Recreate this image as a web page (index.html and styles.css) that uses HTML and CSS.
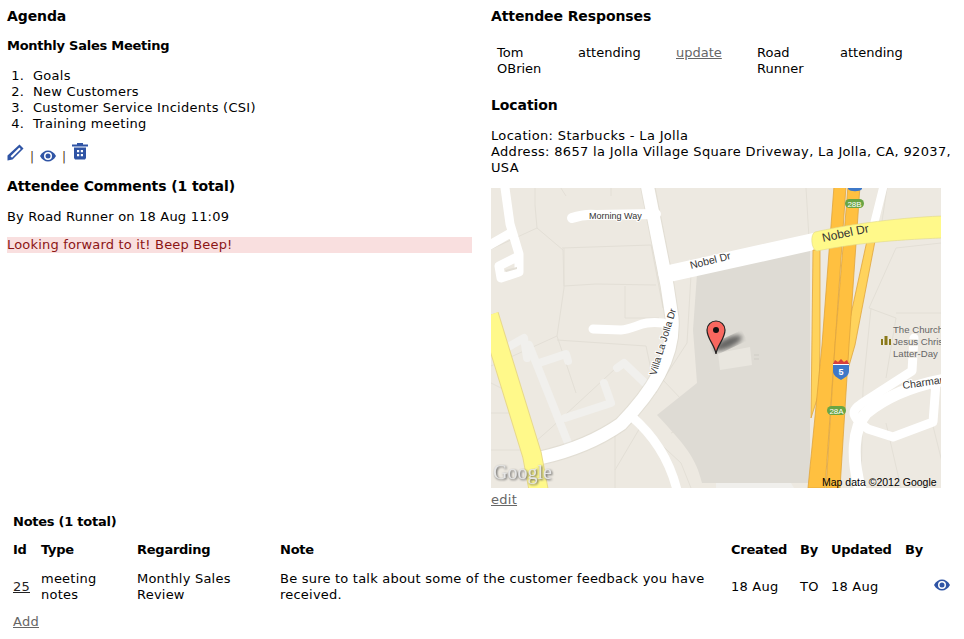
FILE: index.html
```html
<!DOCTYPE html>
<html lang="en">
<head>
    <meta charset="UTF-8">
    <title>Monthly Sales Meeting</title>
    <link rel="stylesheet" href="styles.css">
</head>
<body>

    <svg class="icon-defs" width="0" height="0">
        <symbol id="icon-eye" viewBox="0 0 16 12">
            <path fill-rule="evenodd" fill="#2f54a5" d="M0 6C2 2.400 4.800 .5 8 .5S14 2.400 16 6C14 9.600 11.200 11.500 8 11.500S2 9.600 0 6ZM8 2A4 4 0 1 0 8 10A4 4 0 1 0 8 2Z"/>
            <circle cx="8" cy="6" r="2.500" fill="#2f54a5"/>
        </symbol>
    </svg>

    <div class="columns">
        <div class="col-left">
            <h3 class="title-first">Agenda</h3>
            <h4 class="meeting-name">Monthly Sales Meeting</h4>
            <ol class="agenda">
                <li>Goals</li>
                <li>New Customers</li>
                <li>Customer Service Incidents (CSI)</li>
                <li>Training meeting</li>
            </ol>
            <div class="actions">
                <svg class="icon-pencil" viewBox="0 0 17 17" width="17" height="17">
                    <path fill-rule="evenodd" fill="#2f54a5" d="M12.500 .5L16.500 4.500L5.500 15.500L.5 16.500V11.500ZM12.300 3.500L3.500 12.200L5 13.700L13.800 5Z"/>
                </svg>
                <span class="sep">|</span>
                <svg class="icon-eye" width="16" height="12"><use href="#icon-eye"/></svg>
                <span class="sep">|</span>
                <svg class="icon-trash" viewBox="0 0 16 17" width="16" height="17">
                    <path fill="#2f54a5" d="M5 0H11V1.500H16V3.500H0V1.500H5Z"/>
                    <path fill-rule="evenodd" fill="#2f54a5" d="M2 4.500H14V15L13 16.500H3L2 15ZM5 7V9.300H7.200V7ZM8.800 7V9.300H11V7ZM5 11V13.300H7.200V11ZM8.800 11V13.300H11V11Z"/>
                </svg>
            </div>
            <h3 class="comments-title">Attendee Comments (1 total)</h3>
            <p class="comment-by">By Road Runner on 18 Aug 11:09</p>
            <p class="comment-body">Looking forward to it! Beep Beep!</p>
        </div>

        <div class="col-right">
            <h3 class="title-first">Attendee Responses</h3>
            <table class="responses">
                <tr>
                    <td class="r-name">Tom<br>OBrien</td>
                    <td class="r-status">attending</td>
                    <td class="r-link"><a href="#" class="link-grey">update</a></td>
                    <td class="r-name2">Road<br>Runner</td>
                    <td>attending</td>
                </tr>
            </table>
            <h3 class="location-title">Location</h3>
            <p class="address">Location: Starbucks - La Jolla<br>Address: 8657 la Jolla Village Square Driveway, La Jolla, CA, 92037, USA</p>
            <svg class="map" viewBox="0 0 450 300" width="450" height="300">
                <defs>
                    <filter id="blur"><feGaussianBlur stdDeviation="2.500"/></filter>
                </defs>
                <rect width="450" height="300" fill="#ede9e1"/>

                <!-- parcels -->
                <g fill="none" stroke="#e3dfd6" stroke-width="1">
                    <path d="M44 0V17L46 40L72 62L73 100L66 148L85 205"/>
                    <path d="M46 40L-2 62M66 148L0 178M66 152L155 158L165 205"/>
                    <path d="M71 60L160 57L172 120M73 60V98L105 96L165 97"/>
                    <path d="M134 98V130H168M75 8L68 -3M120 8V0"/>
                    <path d="M0 195L30 210M0 225H30M0 262H35L60 240L125 180"/>
                    <path d="M124 282L150 238L190 275L200 300M124 240V300"/>
                    <path d="M180 245L210 232L172 192L196 155L200 87"/>
                    <path d="M318 50L315 0M390 40L396 0M405 130L378 120L405 60L450 55"/>
                    <path d="M380 120L372 200L370 300M405 130L395 190M450 125H405"/>
                    <path d="M410 300L395 235M455 290L440 230"/>
                </g>

                <!-- mall block -->
                <path fill="#dedbd4" d="M206 86L319 60V295L211 295C205 270 195 258 166 227L206 195L202 142Z"/>
                <path fill="#e9e6df" d="M227 165L259 159L261 177L229 182Z"/>
                <path fill="none" stroke="#cfccc5" d="M263 167H268M263 171H268"/>
                <path fill="#f0efec" d="M225 300V295H300L303 300Z"/>

                <!-- service roads -->
                <g fill="none" stroke="#f1f0ed" stroke-width="8" stroke-linecap="round" stroke-linejoin="round">
                    <path d="M38 157L79 260M48 175L75 166L77 173M74 230L120 215L113 195"/>
                    <path d="M126 180L133 175L156 197M12 162L33 150L36 170"/>
                </g>

                <!-- white roads -->
                <g fill="none" stroke="#d8d3c8" stroke-width="15" stroke-linecap="round" stroke-linejoin="round" opacity=".5">
                    <path d="M157 0L176 97L181 130C184 170 160 205 130 236C110 250 85 262 49 270"/>
                </g>
                <g fill="none" stroke="#fff" stroke-linecap="round" stroke-linejoin="round">
                    <path stroke-width="13" d="M156 -4L176 97L181 130C184 170 160 205 130 236C110 250 85 262 49 270"/>
                    <path stroke-width="17" d="M176 86L325 53"/>
                    <path stroke-width="10" d="M81 30C90 27 96 26 105 27L165 26"/>
                    <path stroke-width="9" d="M14 0L19 36L28 66V84L10 90L8 78L28 68M18 46L-3 58"/>
                    <path stroke-width="9" d="M102 141L130 142C145 141 150 132 172 135"/>
                    <path stroke-width="9" d="M140 228C160 245 178 270 186 302"/>
                    <path stroke-width="8" d="M392 0L383 36"/>
                    <path stroke-width="9" d="M423 150L421 183L376 212C360 222 357 226 377 241L402 249L442 234L445 195"/>
                    <path stroke-width="12" d="M452 192C420 198 396 208 375 225C362 240 360 270 370 304"/>
                </g>
                <path fill="#e3dfd6" d="M14 82L26 79V81L15 84Z"/>

                <!-- yellow roads -->
                <g fill="none" stroke-linejoin="round">
                    <path stroke="#e8d98a" stroke-width="20" d="M-2 127L41 267L48 304"/>
                    <path stroke="#fff98a" stroke-width="18" d="M-2 127L41 267L48 304"/>
                </g>

                <!-- freeway -->
                <g stroke="#e0a53c" stroke-width=".8">
                    <path fill="#ffd35c" d="M322 62H329V157L328 205L320 230Z"/>
                    <path fill="#ffd35c" d="M377 48L385 48L364 157L353 195H345Z"/>
                    <path fill="#ffc040" d="M343 -2H355L344 157L334 300H317L331 157Z"/>
                    <path fill="#ffc040" d="M357 -2H369L358 157L349 300H335L344 157Z"/>
                </g>

                <!-- Nobel Dr, yellow part -->
                <path fill="#fff98a" stroke="#e0d98a" stroke-width=".6" d="M324 44C350 38 400 30 451 28V50C400 52 360 56 326 63C320 62 319 46 324 44Z"/>

                <!-- shields -->
                <rect x="354" y="11" width="19" height="9" rx="4.500" fill="#69a544"/>
                <text class="shield-text" x="363.500" y="18.500">28B</text>
                <rect x="336" y="218" width="19" height="9" rx="4.500" fill="#69a544"/>
                <text class="shield-text" x="345.500" y="225.500">28A</text>
                <path fill="#3e78c8" d="M357 -2H371V1C369 4 359 4 357 1Z"/>
                <path fill="#3e78c8" d="M342 175H358V183C358 188 353 190 350 192C347 190 342 188 342 183Z"/>
                <path fill="#d8403c" d="M342 176L344 172L347 174L350 171L353 174L356 172L358 176V177H342Z"/>
                <rect x="342" y="176" width="16" height="1" fill="#fff"/>
                <text class="shield-num" x="350" y="187">5</text>

                <!-- street labels -->
                <text class="label label-small" transform="translate(98 31)">Morning Way</text>
                <text class="label label-mid" transform="translate(200 81) rotate(-14)">Nobel Dr</text>
                <text class="label label-big" transform="translate(332 54) rotate(-12)">Nobel Dr</text>
                <text class="label" transform="translate(165 188) rotate(-73)">Villa La Jolla Dr</text>
                <text class="label label-mid" transform="translate(412 201) rotate(-8)">Charman</text>
                <text class="label label-grey" x="402" y="145">The Church</text>
                <text class="label label-grey" x="402" y="157">Jesus Chris</text>
                <text class="label label-grey" x="402" y="169">Latter-Day</text>
                <path fill="#8b7a1a" d="M390 157V151H392V157ZM393.500 157V148H396.500V157ZM398 157V151H400V157Z"/>

                <!-- marker -->
                <ellipse cx="237" cy="155" rx="15" ry="5" fill="#444" opacity=".8" filter="url(#blur)" transform="rotate(-25 237 155)"/>
                <path fill="#f8675f" stroke="#222" stroke-width="1.200" d="M225 166C224 157 216 151 216 142A9 9 0 1 1 234 142C234 151 226 157 225 166Z"/>
                <circle cx="225" cy="142" r="3" fill="#111"/>

                <text class="google" x="2" y="291">Google</text>
                <text class="copyright" x="331" y="298">Map data ©2012 Google</text>
            </svg>
            <a href="#" class="link-grey edit-link">edit</a>
        </div>
    </div>

    <div class="notes">
        <h4 class="notes-title">Notes (1 total)</h4>
        <table class="notes-table">
            <tr>
                <th class="c-id">Id</th>
                <th class="c-type">Type</th>
                <th class="c-regarding">Regarding</th>
                <th class="c-note">Note</th>
                <th class="c-created">Created</th>
                <th class="c-by">By</th>
                <th class="c-updated">Updated</th>
                <th class="c-by2">By</th>
                <th></th>
            </tr>
            <tr>
                <td><a href="#" class="link-dark">25</a></td>
                <td>meeting<br>notes</td>
                <td>Monthly Sales<br>Review</td>
                <td>Be sure to talk about some of the customer feedback you have received.</td>
                <td>18 Aug</td>
                <td>TO</td>
                <td>18 Aug</td>
                <td></td>
                <td><svg class="icon-eye note-eye" width="16" height="12"><use href="#icon-eye"/></svg></td>
            </tr>
        </table>
        <a href="#" class="link-grey add-link">Add</a>
    </div>

</body>
</html>
```

FILE: styles.css
```css
body {
    margin: 0;
    padding: 8px 7px 0;
    font-family: Verdana, "DejaVu Sans", sans-serif;
    font-size: 13px;
    line-height: 16px;
    letter-spacing: .27px;
    color: #000;
    background: #fff;
}
h3, h4, p, ol {
    margin: 0;
}
h3 {
    font-size: 14px;
    font-weight: bold;
    letter-spacing: -.1px;
}
h4, .notes-table th {
    font-size: 13px;
    font-weight: bold;
    letter-spacing: -.25px;
}
.icon-defs {
    position: absolute;
}
.columns {
    display: flex;
    gap: 19px;
}
.col-left {
    width: 465px;
}
.col-right {
    width: 466px;
}
.meeting-name {
    margin-top: 14px;
}
.agenda {
    margin-top: 14px;
    padding-left: 26px;
}
.agenda li::marker {
    content: counter(list-item) ".  ";
}
.actions {
    display: flex;
    align-items: flex-end;
    gap: 6px;
    margin-top: 12px;
    height: 19px;
}
.sep {
    font-size: 12px;
    line-height: 12px;
    letter-spacing: 0;
    color: #4a3520;
}
.icon-eye {
    margin-bottom: 1px;
}
.icon-trash {
    margin-bottom: 3px;
}
.icon-pencil {
    margin-bottom: 2px;
}
.comments-title {
    margin-top: 15px;
}
.comment-by {
    margin-top: 15px;
    letter-spacing: .2px;
}
.comment-body {
    margin-top: 12px;
    background: #f9dfdf;
    color: #8c1515;
    letter-spacing: .18px;
}
.responses {
    border-collapse: collapse;
    margin-top: 21px;
    letter-spacing: 0;
}
.responses td {
    padding: 0;
    vertical-align: top;
}
.r-name {
    width: 81px;
    padding-left: 6px !important;
}
.r-status {
    width: 98px;
}
.r-link {
    width: 81px;
}
.r-name2 {
    width: 83px;
}
.location-title {
    margin-top: 20px;
}
.address {
    margin-top: 15px;
    width: 466px;
    letter-spacing: .33px;
}
.map {
    display: block;
    margin-top: 12px;
    letter-spacing: 0;
}
.label {
    font-family: "Liberation Sans", Arial, sans-serif;
    font-size: 10px;
    fill: #333;
    stroke: #fff;
    stroke-width: 2px;
    paint-order: stroke;
}
.label-small {
    font-size: 9px;
}
.label-mid {
    font-size: 10.5px;
}
.label-big {
    font-size: 12px;
    stroke: #fff98a;
}
.label-grey {
    font-size: 9.6px;
    fill: #666;
    stroke: #ede9e1;
}
.shield-text {
    font-family: "Liberation Sans", Arial, sans-serif;
    font-size: 8px;
    fill: #fff;
    text-anchor: middle;
}
.shield-num {
    font-family: "Liberation Sans", Arial, sans-serif;
    font-size: 9px;
    font-weight: bold;
    fill: #fff;
    text-anchor: middle;
}
.google {
    font-family: "Liberation Serif", serif;
    font-size: 20px;
    fill: #e6e6e6;
    filter: drop-shadow(1px 1px 1px #555);
}
.copyright {
    font-family: "Liberation Sans", Arial, sans-serif;
    font-size: 10.5px;
    fill: #000;
}
.link-grey {
    color: #666;
}
.link-dark {
    color: #222;
}
.edit-link {
    display: block;
    margin-top: 4px;
}
.notes {
    padding-left: 6px;
    margin-top: 6px;
}
.notes-table {
    border-collapse: collapse;
    table-layout: fixed;
    margin-top: 12px;
    width: 930px;
    letter-spacing: .22px;
}
.notes-table th, .notes-table td {
    padding: 0;
    text-align: left;
}
.notes-table th {
    padding-bottom: 13px;
}
.note-eye {
    display: block;
    margin-bottom: 4px;
}
.c-id { width: 28px; }
.c-type { width: 96px; }
.c-regarding { width: 143px; }
.c-note { width: 451px; }
.c-created { width: 69px; }
.c-by { width: 31px; }
.c-updated { width: 74px; }
.c-by2 { width: 29px; }
.add-link {
    display: block;
    margin-top: 11px;
}
```
